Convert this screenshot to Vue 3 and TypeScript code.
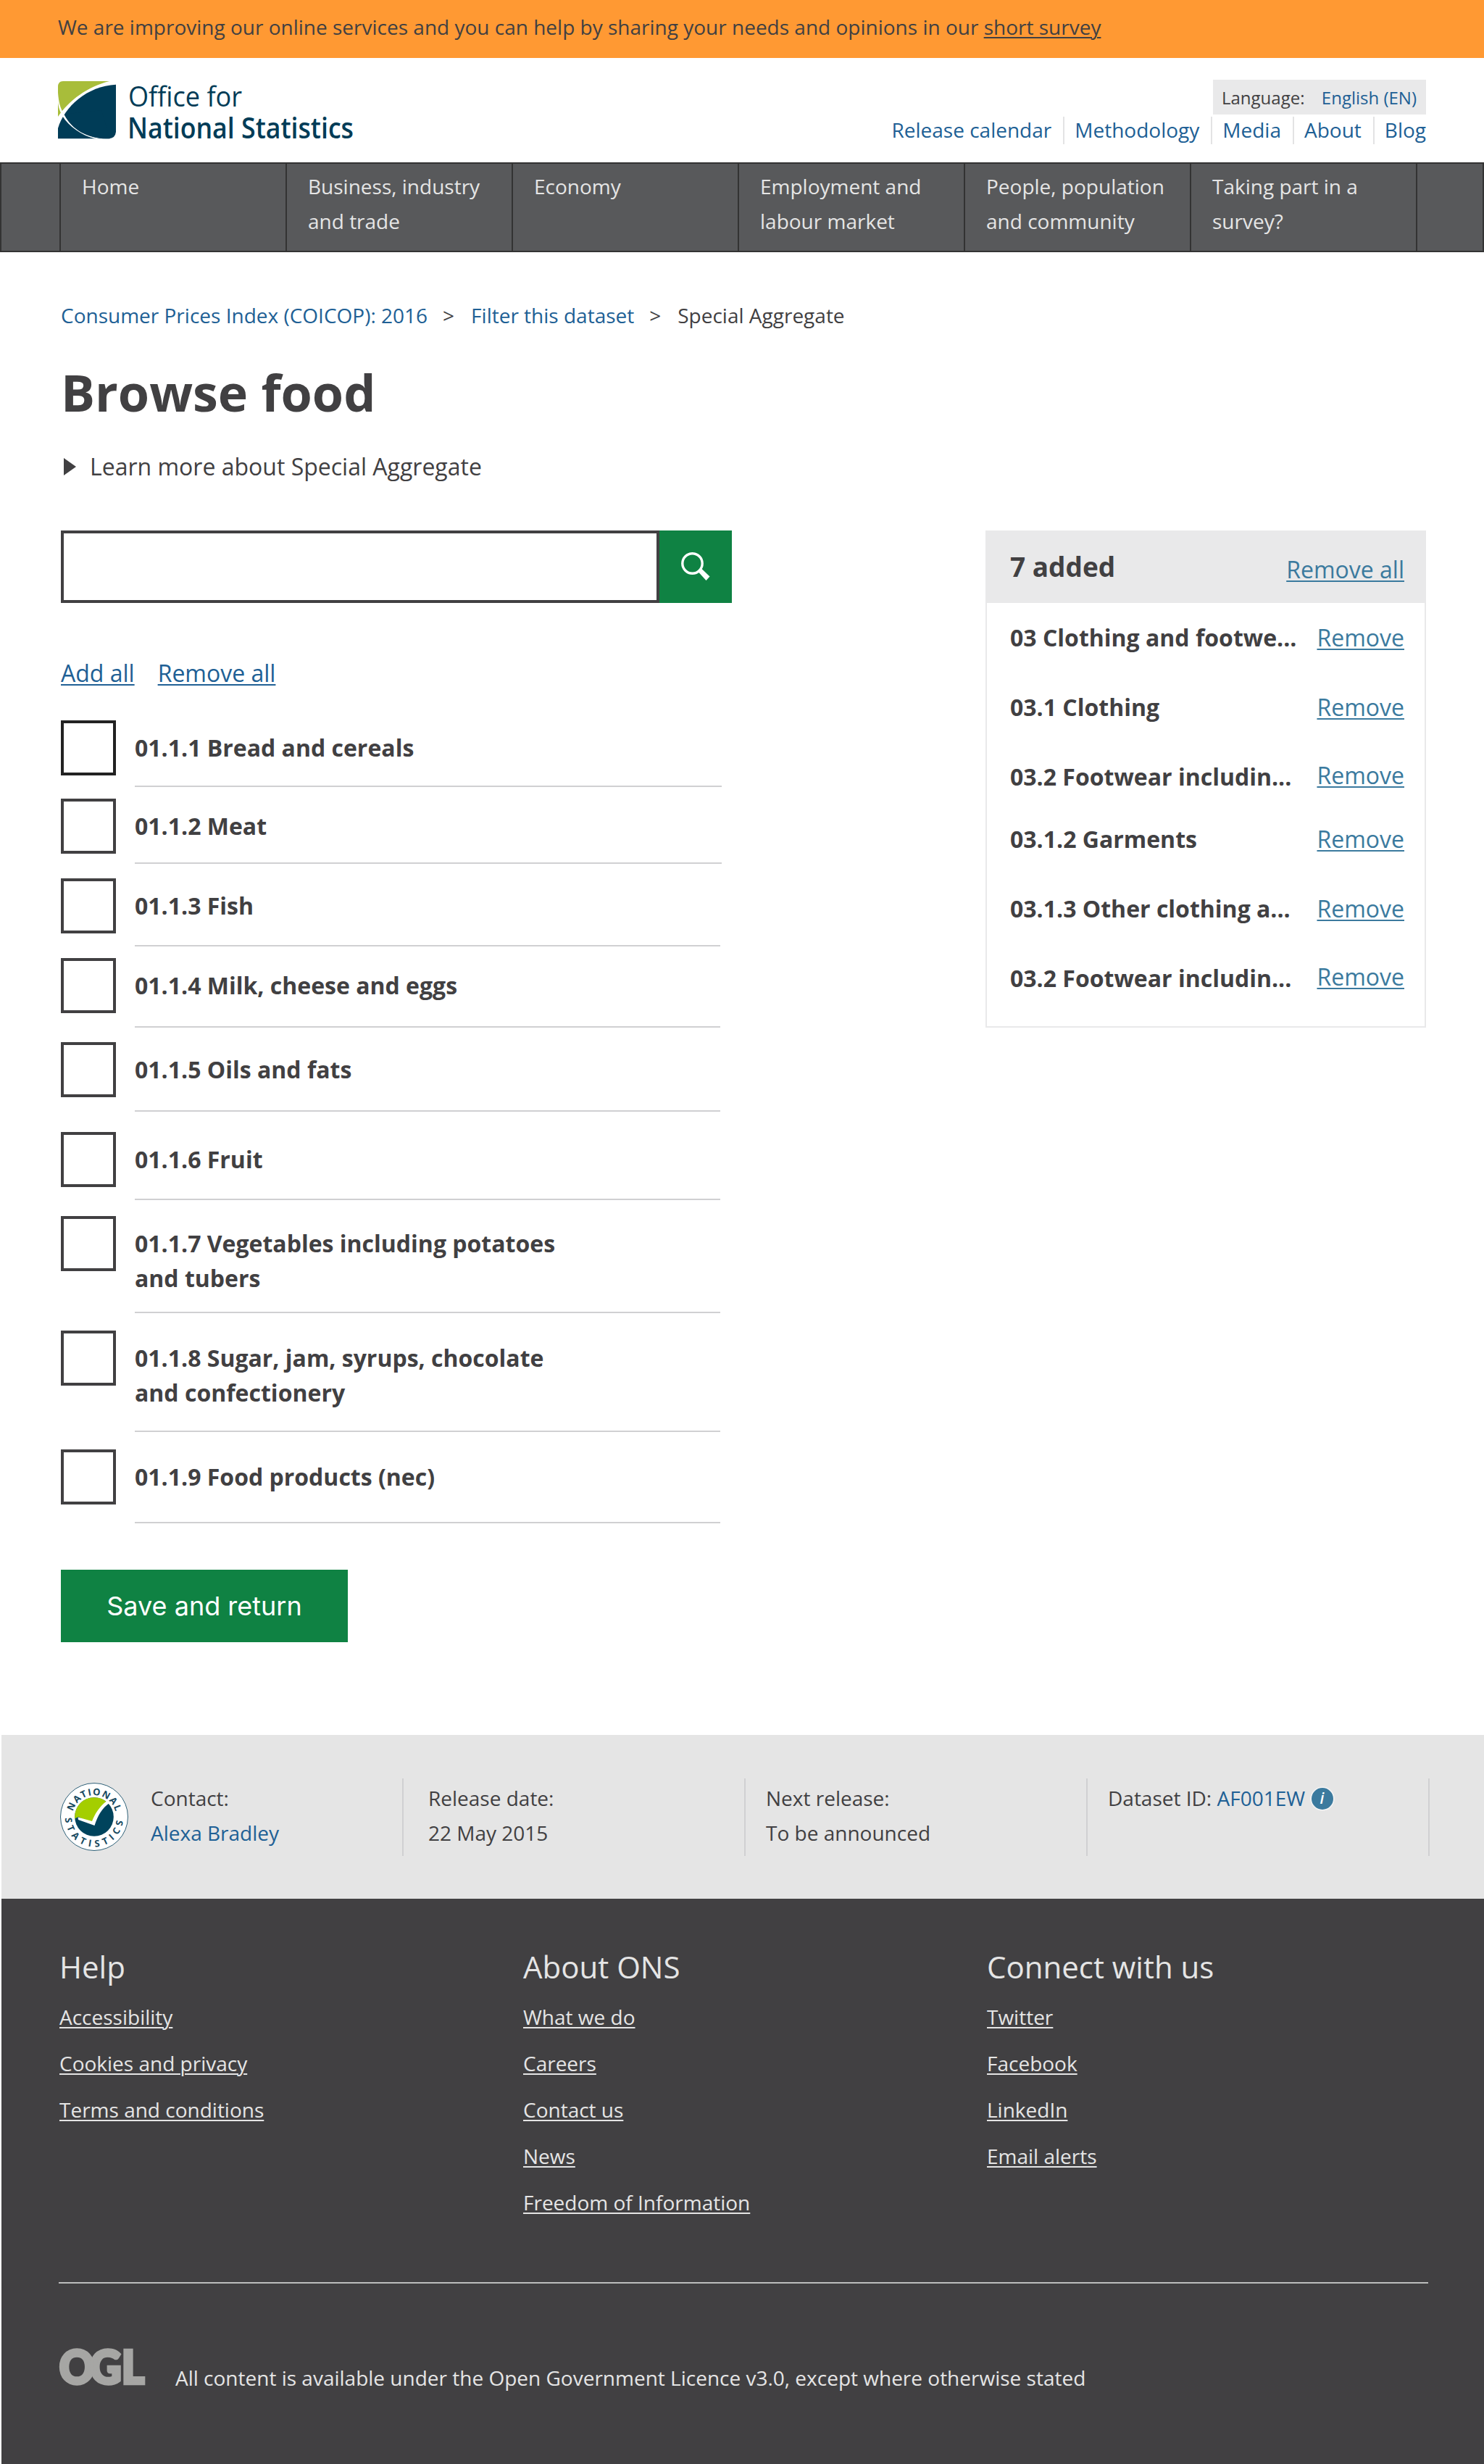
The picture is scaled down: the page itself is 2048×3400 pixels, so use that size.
<script setup lang="ts">
interface Item {
  label: string[]
  /** height of the row including its rule */
  height: number
  /** gap between the rule and the next row */
  gap: number
  first?: boolean
  wide?: boolean
}
interface Added {
  label: string
  gap: number
  raised?: boolean
}
interface FooterColumn {
  title: string
  links: string[]
}

const topLinks: string[] = ['Release calendar', 'Methodology', 'Media', 'About', 'Blog']

const navItems: string[][] = [
  ['Home'],
  ['Business, industry', 'and trade'],
  ['Economy'],
  ['Employment and', 'labour market'],
  ['People, population', 'and community'],
  ['Taking part in a', 'survey?'],
]

const items: Item[] = [
  { label: ['01.1.1 Bread and cereals'], height: 92, gap: 16, first: true, wide: true },
  { label: ['01.1.2 Meat'], height: 90, gap: 20, wide: true },
  { label: ['01.1.3 Fish'], height: 94, gap: 16 },
  { label: ['01.1.4 Milk, cheese and eggs'], height: 96, gap: 20 },
  { label: ['01.1.5 Oils and fats'], height: 96, gap: 28 },
  { label: ['01.1.6 Fruit'], height: 94, gap: 22 },
  { label: ['01.1.7 Vegetables including potatoes', 'and tubers'], height: 134, gap: 24 },
  { label: ['01.1.8 Sugar, jam, syrups, chocolate', 'and confectionery'], height: 140, gap: 24 },
  { label: ['01.1.9 Food products (nec)'], height: 102, gap: 0 },
]

const added: Added[] = [
  { label: '03 Clothing and footwe...', gap: 48 },
  { label: '03.1 Clothing', gap: 48 },
  { label: '03.2 Footwear includin...', gap: 38, raised: true },
  { label: '03.1.2 Garments', gap: 48 },
  { label: '03.1.3 Other clothing a...', gap: 48 },
  { label: '03.2 Footwear includin...', gap: 0, raised: true },
]

const columns: FooterColumn[] = [
  { title: 'Help', links: ['Accessibility', 'Cookies and privacy', 'Terms and conditions'] },
  { title: 'About ONS', links: ['What we do', 'Careers', 'Contact us', 'News', 'Freedom of Information'] },
  { title: 'Connect with us', links: ['Twitter', 'Facebook', 'LinkedIn', 'Email alerts'] },
]
</script>

<template>
  <div class="page">
    <div class="banner">
      We are improving our online services and you can help by sharing your needs and opinions in our&nbsp;<a class="u">short survey</a>
    </div>

    <header class="header">
      <svg class="logo" width="412" height="88" viewBox="0 0 412 88">
        <path fill="#a8bd3a" d="M7 0H71C40 8 16 26 0 49V8Q0 0 7 0Z" />
        <path fill="#003c57" d="M80 4.8V70Q79 79 70 79.300H0V65C9 35 40 7 80 4.8Z" />
        <path fill="#fff" d="M0 16C1 29 3 37 8.500 46C20 68 40 78 66 79.500L52 79.500C32 75 15 62 6 48C2 41 0 33 0 27Z" />
        <path fill="#003c57" d="M9 45.500C20 67 40 77 62 79.300H72L60 40Z" />
        <text x="97" y="34.500" font-size="39" textLength="157" lengthAdjust="spacingAndGlyphs">Office for</text>
        <text x="96" y="78.500" font-size="39" font-weight="600" textLength="312" lengthAdjust="spacingAndGlyphs">National Statistics</text>
      </svg>
      <div class="header-right">
        <div class="lang"><span>Language:</span><a>English (EN)</a></div>
        <div class="top-links">
          <a v-for="l in topLinks" :key="l">{{ l }}</a>
        </div>
      </div>
    </header>

    <nav class="nav">
      <div v-for="(n, i) in navItems" :key="i" class="nav-item">
        <div v-for="t in n" :key="t">{{ t }}</div>
      </div>
      <div class="nav-end"></div>
    </nav>

    <main class="main">
      <div class="crumbs">
        <a>Consumer Prices Index (COICOP): 2016</a><span class="sep">&gt;</span><a>Filter this dataset</a><span class="sep">&gt;</span><span>Special Aggregate</span>
      </div>
      <h1>Browse food</h1>
      <div class="learn">
        <svg width="17" height="24" viewBox="0 0 17 24"><path d="M0 0L17 12L0 24Z" fill="#414042" /></svg>
        <span>Learn more about Special Aggregate</span>
      </div>

      <div class="cols">
        <section class="left">
          <div class="search">
            <div class="field"></div>
            <div class="go">
              <svg width="44" height="44" viewBox="0 0 44 44">
                <circle cx="17.500" cy="17.500" r="13.700" fill="none" stroke="#fff" stroke-width="3.400" />
                <path d="M30 24.500L41.500 35.500L36.500 41L26 29.500Z" fill="#fff" />
              </svg>
            </div>
          </div>
          <div class="bulk"><a class="u">Add all</a><a class="u">Remove all</a></div>
          <div
            v-for="it in items"
            :key="it.label[0]"
            class="row"
            :style="{ height: it.height + 'px', marginBottom: it.gap + 'px' }"
          >
            <div class="box" :class="{ dark: it.first }"></div>
            <div class="label" :class="{ wide: it.wide }">
              <div v-for="t in it.label" :key="t">{{ t }}</div>
            </div>
          </div>
          <button class="save">Save and return</button>
        </section>

        <aside class="basket">
          <div class="basket-head"><strong>7 added</strong><a class="u">Remove all</a></div>
          <div v-for="(a, i) in added" :key="i" class="added" :style="{ marginBottom: a.gap + 'px' }">
            <strong>{{ a.label }}</strong><a class="u" :class="{ raised: a.raised }">Remove</a>
          </div>
        </aside>
      </div>
    </main>

    <section class="meta">
      <div class="cell contact">
        <svg width="96" height="96" viewBox="-48 -48 96 96">
          <defs>
            <path id="arcTop" d="M-29.200-7.500A30.200 30.200 0 0 1 29.200-7.500" />
            <path id="arcBottom" d="M-40 1.500A40 40 0 0 0 40 1.500" />
          </defs>
          <circle r="46.500" fill="#fff" stroke="#2f6178" stroke-width="1" />
          <circle r="26.800" fill="#00435c" />
          <path d="M-26.700 2.500A26.800 26.800 0 0 1 19.500-18.400C9-11 3-1 -1 10L-22 0Z" fill="#a4ce00" />
          <path d="M-22.500 .5L-22 4L.5 12C5-2 11-12 21.500-19.500L17.500-22C7-14 1-4-3 6Z" fill="#fff" />
          <text class="ring"><textPath href="#arcTop" textLength="79" lengthAdjust="spacing">NATIONAL</textPath></text>
          <text class="ring"><textPath href="#arcBottom" textLength="121" lengthAdjust="spacing">STATISTICS</textPath></text>
        </svg>
        <div class="contact-text">
          <div>Contact:</div>
          <a>Alexa Bradley</a>
        </div>
      </div>
      <div class="cell release">
        <div>Release date:</div>
        <div>22 May 2015</div>
      </div>
      <div class="cell">
        <div>Next release:</div>
        <div>To be announced</div>
      </div>
      <div class="cell">
        <div class="ds">
          <span>Dataset ID:&nbsp;</span><a>AF001EW</a>
          <svg width="34" height="34" viewBox="0 0 34 34">
            <circle cx="17" cy="17" r="15.800" fill="#3b7a9e" stroke="#f4f4f4" stroke-width="1.600" />
            <text x="16.500" y="24" text-anchor="middle" font-size="21" font-style="italic" font-weight="600" fill="#fff">i</text>
          </svg>
        </div>
      </div>
    </section>

    <footer class="footer">
      <div class="fcols">
        <div v-for="c in columns" :key="c.title" class="fcol">
          <h2>{{ c.title }}</h2>
          <div v-for="l in c.links" :key="l" class="flink"><a class="u">{{ l }}</a></div>
        </div>
      </div>
      <div class="licence">
        <svg class="ogl" width="124" height="56" viewBox="0 0 124 56">
          <text x="0 44 89.500" y="49.500" transform="scale(.96 1)">OGL</text>
        </svg>
        <span>All content is available under the Open Government Licence v3.0, except where otherwise stated</span>
      </div>
    </footer>
  </div>
</template>

<style>
body {
  margin: 0;
  background: #fff;
}
</style>

<style scoped>
.page {
  width: 2048px;
  height: 3400px;
  overflow: hidden;
  box-sizing: border-box;
  font-family: 'Open Sans', 'Noto Sans', sans-serif;
  font-size: 28px;
  line-height: 48px;
  color: #414042;
  white-space: nowrap;
}
a {
  color: #206095;
}
svg {
  overflow: visible;
}
.u {
  text-decoration: underline;
  text-decoration-thickness: 2px;
  text-underline-offset: 3px;
}
.banner {
  height: 67px;
  padding: 13px 80px 0;
  background: #ff9933;
}
.banner a {
  color: #414042;
}
.header {
  display: flex;
  justify-content: space-between;
  height: 144px;
  padding: 0 80px;
}
.logo {
  margin-top: 32px;
  fill: #003c57;
}
.header-right {
  display: flex;
  flex-direction: column;
  align-items: flex-end;
  padding-top: 30px;
}
.lang {
  display: flex;
  justify-content: space-between;
  box-sizing: border-box;
  width: 294px;
  height: 48px;
  padding: 0 13px 0 12px;
  background: #e9e9ea;
  font-size: 24px;
  line-height: 50px;
}
.top-links {
  display: flex;
  margin-top: 3px;
  line-height: 36px;
}
.top-links a {
  height: 38px;
  padding: 0 16px 0 14px;
  border-right: 2px solid #e3e3e4;
}
.top-links a:last-child {
  padding-right: 0;
  border-right: 0;
}
.nav {
  display: flex;
  box-sizing: border-box;
  height: 124px;
  padding-left: 80px;
  border: 2px solid #333;
  background: #58595b;
  color: #e5e5e5;
}
.nav-item {
  box-sizing: border-box;
  width: 312px;
  padding: 7px 0 0 29px;
  border-left: 2px solid #333;
}
.nav-end {
  border-left: 2px solid #333;
}
.main {
  height: 2046px;
  padding: 0 80px 0 84px;
}
.crumbs {
  padding-top: 63px;
}
.sep {
  margin: 0 23px 0 21px;
}
h1 {
  margin: 34px 0 0;
  font-size: 70px;
  line-height: 96px;
  font-weight: 700;
}
.learn {
  display: flex;
  align-items: center;
  gap: 19px;
  margin-top: 31px;
  padding-left: 4px;
  font-size: 32px;
}
.cols {
  display: flex;
  justify-content: space-between;
  align-items: flex-start;
  margin-top: 64px;
}
.search {
  display: flex;
}
.field {
  box-sizing: border-box;
  width: 826px;
  height: 100px;
  border: 4px solid #414042;
}
.go {
  display: flex;
  align-items: center;
  justify-content: center;
  width: 100px;
  height: 100px;
  background: #0f8243;
}
.bulk {
  display: flex;
  gap: 32px;
  margin: 73px 0 41px;
  font-size: 32px;
}
.row {
  display: flex;
  gap: 26px;
}
.box {
  box-sizing: border-box;
  width: 76px;
  height: 76px;
  border: 4px solid #414042;
}
.box.dark {
  border-color: #222;
}
.label {
  width: 808px;
  padding-top: 14px;
  border-bottom: 2px solid #d0d0d2;
  font-size: 32px;
  font-weight: 700;
}
.label.wide {
  width: 810px;
}
.save {
  display: block;
  width: 396px;
  height: 100px;
  margin-top: 64px;
  padding: 0;
  border: 0;
  background: #0f8243;
  color: #fff;
  font-family: Inter, sans-serif;
  font-size: 36px;
}
.basket {
  box-sizing: border-box;
  width: 608px;
  height: 686px;
  border: 2px solid #e9e9ea;
  border-top: 0;
  font-size: 32px;
}
.basket a {
  color: #3b7a9e;
}
.basket-head {
  display: flex;
  justify-content: space-between;
  align-items: flex-start;
  box-sizing: border-box;
  height: 100px;
  margin-bottom: 24px;
  padding: 26px 28px 0 32px;
  background: #e9e9ea;
}
.basket-head strong {
  font-size: 37px;
}
.basket-head a {
  margin-top: 4px;
}
.added {
  display: flex;
  justify-content: space-between;
  padding: 0 28px 0 32px;
}
.raised {
  margin-top: -2px;
}
.meta {
  display: flex;
  height: 166px;
  margin-left: 2px;
  padding: 60px 0 0 80px;
  background: #e5e5e5;
}
.cell {
  box-sizing: border-box;
  flex: none;
  width: 472px;
  height: 107px;
  padding: 3px 0 0 28px;
  border-right: 2px solid #d0d0d2;
}
.release {
  padding-left: 34px;
}
.contact {
  display: flex;
  width: 475px;
  padding-left: 0;
}
.contact > svg {
  margin: 2px 30px 0 0;
}
.ring {
  font-size: 13px;
  font-weight: 700;
  fill: #17495f;
}
.ds {
  display: flex;
}
.ds svg {
  margin: 8px 0 0 7px;
}
.footer {
  height: 780px;
  margin-left: 2px;
  background: #414042;
  color: #e5e5e5;
}
.footer a {
  color: #e5e5e5;
}
.fcols {
  display: flex;
  height: 529px;
  margin: 0 77px 0 79px;
  border-bottom: 2px solid #bcbdbd;
}
.fcol {
  flex: none;
  box-sizing: border-box;
  width: 640px;
  padding: 70px 0 0 1px;
}
.fcol:last-child {
  width: 612px;
}
h2 {
  margin: 0 0 21px;
  font-size: 42px;
  line-height: 48px;
  font-weight: 400;
}
.flink {
  margin-bottom: 16px;
}
.licence {
  display: flex;
  align-items: flex-start;
  gap: 36px;
  padding: 88px 0 0 80px;
}
.licence span {
  margin-top: 18px;
}
.ogl text {
  font-family: Lato, sans-serif;
  font-size: 62px;
  font-weight: 900;
  fill: #a6a6a4;
  stroke: #a6a6a4;
  stroke-width: 4.500px;
}
</style>
